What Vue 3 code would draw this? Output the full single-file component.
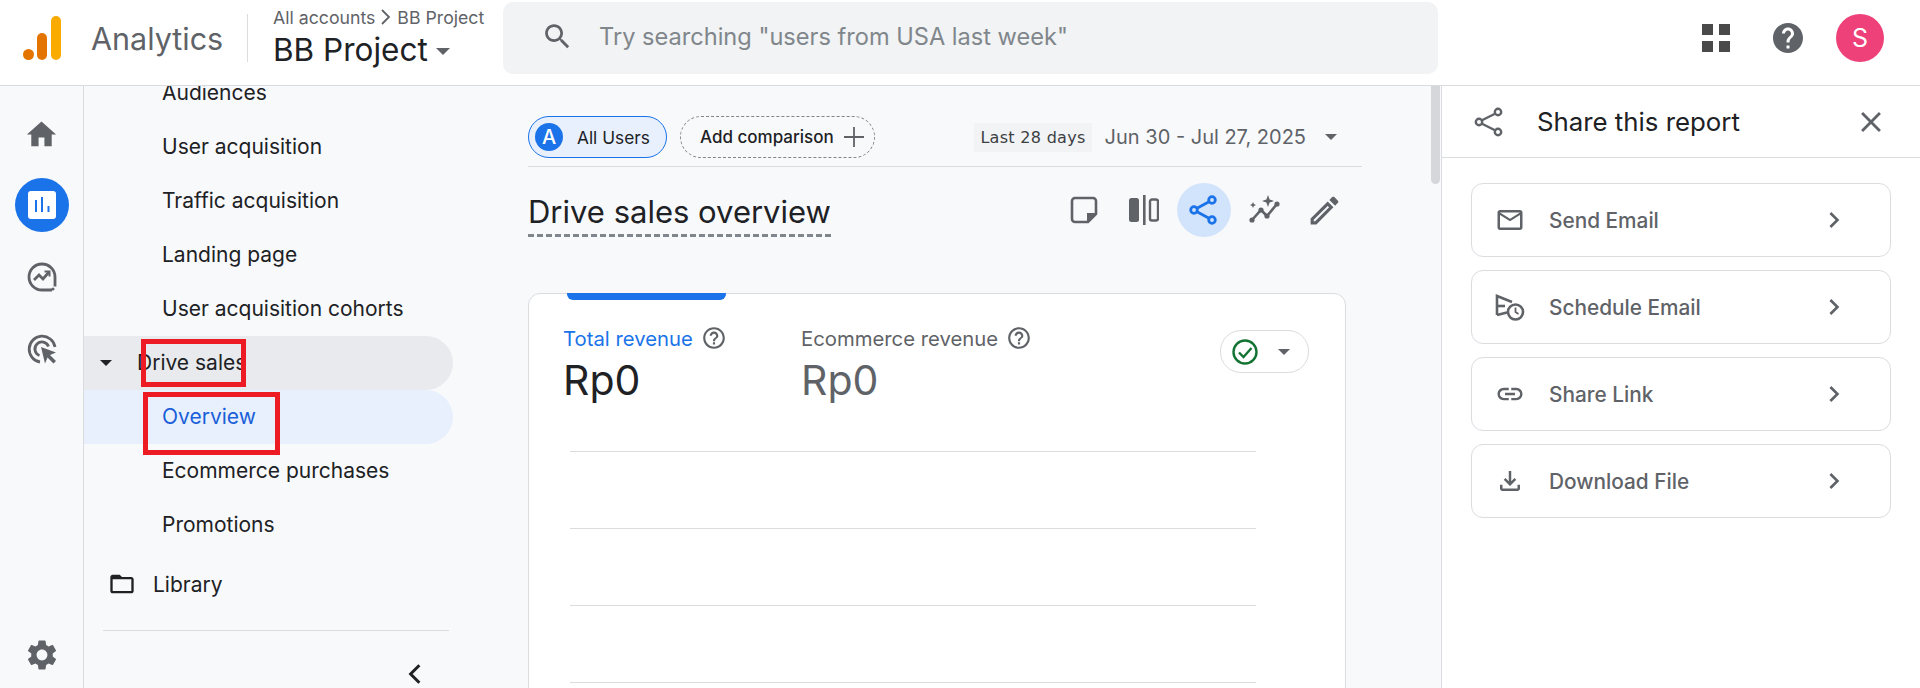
<script setup>
const P = {
  search: 'M15.5 14h-.79l-.28-.27C15.41 12.59 16 11.11 16 9.5 16 5.91 13.09 3 9.5 3S3 5.91 3 9.5 5.91 16 9.5 16c1.61 0 3.09-.59 4.23-1.57l.27.28v.79l5 4.99L20.49 19l-4.99-5zm-6 0C7.01 14 5 11.99 5 9.5S7.01 5 9.5 5 14 7.01 14 9.5 11.99 14 9.5 14z',
  help: 'M11 18h2v-2h-2v2zm1-16C6.48 2 2 6.48 2 12s4.48 10 10 10 10-4.48 10-10S17.52 2 12 2zm0 18c-4.41 0-8-3.59-8-8s3.59-8 8-8 8 3.59 8 8-3.59 8-8 8zm0-14c-2.21 0-4 1.79-4 4h2c0-1.1.9-2 2-2s2 .9 2 2c0 2-3 1.75-3 5h2c0-2.25 3-2.5 3-5 0-2.21-1.79-4-4-4z',
  helpFill: 'M12 2C6.48 2 2 6.48 2 12s4.48 10 10 10 10-4.48 10-10S17.52 2 12 2zm1 17h-2v-2h2v2zm2.07-7.75l-.9.92C13.45 12.9 13 13.5 13 15h-2v-.5c0-1.1.45-2.1 1.17-2.83l1.24-1.26c.37-.36.59-.86.59-1.41 0-1.1-.9-2-2-2s-2 .9-2 2H8c0-2.21 1.79-4 4-4s4 1.79 4 4c0 .88-.36 1.68-.93 2.25z',
  home: 'M10 20v-6h4v6h5v-8h3L12 3 2 12h3v8z',
  gear: 'M19.14 12.94c.04-.3.06-.61.06-.94 0-.32-.02-.64-.07-.94l2.03-1.58c.18-.14.23-.41.12-.61l-1.92-3.32c-.12-.22-.37-.29-.59-.22l-2.39.96c-.5-.38-1.03-.7-1.62-.94l-.36-2.54c-.04-.24-.24-.41-.48-.41h-3.84c-.24 0-.43.17-.47.41l-.36 2.54c-.59.24-1.13.57-1.62.94l-2.39-.96c-.22-.08-.47 0-.59.22L2.74 8.87c-.12.21-.08.47.12.61l2.03 1.58c-.05.3-.09.63-.09.94s.02.64.07.94l-2.03 1.58c-.18.14-.23.41-.12.61l1.92 3.32c.12.22.37.29.59.22l2.39-.96c.5.38 1.03.7 1.62.94l.36 2.54c.05.24.24.41.48.41h3.84c.24 0 .44-.17.47-.41l.36-2.54c.59-.24 1.13-.56 1.62-.94l2.39.96c.22.08.47 0 .59-.22l1.92-3.32c.12-.22.07-.47-.12-.61l-2.01-1.58zM12 15.6c-1.98 0-3.6-1.62-3.6-3.6s1.62-3.6 3.6-3.6 3.6 1.62 3.6 3.6-1.62 3.6-3.6 3.6z',
  folder: 'M20 6h-8l-2-2H4c-1.1 0-1.99.9-1.99 2L2 18c0 1.1.9 2 2 2h16c1.1 0 2-.9 2-2V8c0-1.1-.9-2-2-2zm0 12H4V8h16v10z',
  pencil: 'M3 17.25V21h3.75L17.81 9.94l-3.75-3.75L3 17.25zM5.92 19H5v-.92l9.06-9.06.92.92L5.92 19zM20.71 7.04c.39-.39.39-1.02 0-1.41l-2.34-2.34c-.2-.2-.45-.29-.71-.29s-.51.09-.7.28l-1.83 1.83 3.75 3.75 1.83-1.82z',
  close: 'M19 6.41L17.59 5 12 10.59 6.41 5 5 6.41 10.59 12 5 17.59 6.41 19 12 13.41 17.59 19 19 17.59 13.41 12z',
  chevron: 'M10 6L8.59 7.41 13.17 12l-4.58 4.59L10 18l6-6z',
  mail: 'M20 4H4c-1.1 0-2 .9-2 2v12c0 1.1.9 2 2 2h16c1.1 0 2-.9 2-2V6c0-1.1-.9-2-2-2zm0 14H4V8l8 5 8-5v10zm-8-7L4 6h16l-8 5z',
  link: 'M3.9 12c0-1.71 1.39-3.1 3.1-3.1h4V7H7c-2.76 0-5 2.24-5 5s2.24 5 5 5h4v-1.9H7c-1.71 0-3.1-1.39-3.1-3.1zM8 13h8v-2H8v2zm9-6h-4v1.9h4c1.71 0 3.1 1.39 3.1 3.1s-1.39 3.1-3.1 3.1h-4V17h4c2.76 0 5-2.24 5-5s-2.24-5-5-5z',
  download: 'M18 15v3H6v-3H4v3c0 1.1.9 2 2 2h12c1.1 0 2-.9 2-2v-3h-2zm-1-4l-1.41-1.41L13 12.17V4h-2v8.17L8.41 9.59 7 11l5 5 5-5z'
}
const topItems = ['Audiences', 'User acquisition', 'Traffic acquisition', 'Landing page', 'User acquisition cohorts']
const shareRows = [
  { label: 'Send Email', icon: 'mail' },
  { label: 'Schedule Email', icon: 'schedule' },
  { label: 'Share Link', icon: 'link' },
  { label: 'Download File', icon: 'download' }
]
</script>

<template>
  <div class="page">
    <header class="top">
      <svg class="logo" width="38" height="44" viewBox="0 0 38 44">
        <rect x="28" y="0" width="10" height="44" rx="5" fill="#f9ab00" />
        <rect x="14" y="17" width="10" height="27" rx="5" fill="#e37400" />
        <circle cx="5.5" cy="38.5" r="5.5" fill="#e37400" />
      </svg>
      <span class="brand">Analytics</span>
      <span class="vline"></span>
      <div class="crumbs">
        <div class="crumb-line">All accounts
          <svg width="14" height="20" viewBox="0 0 14 20"><path d="M3 3l7 7-7 7" fill="none" stroke="#5f6368" stroke-width="1.8" /></svg>
          BB Project</div>
        <div class="prop">BB Project <span class="caret-big"></span></div>
      </div>
      <div class="search">
        <svg width="33" height="33" viewBox="0 0 24 24"><path :d="P.search" fill="#5f6368" /></svg>
        <span>Try searching "users from USA last week"</span>
      </div>
      <div class="top-right">
        <div class="apps"><i></i><i></i><i></i><i></i></div>
        <svg width="36" height="36" viewBox="0 0 24 24"><path :d="P.helpFill" fill="#5f6368" /></svg>
        <div class="avatar">S</div>
      </div>
    </header>

    <div class="body">
      <aside class="rail">
        <svg class="ri" width="35" height="35" viewBox="0 0 24 24"><path :d="P.home" fill="#5f6368" /></svg>
        <div class="rail-active">
          <svg width="28" height="28" viewBox="0 0 28 28">
            <rect width="28" height="28" rx="3" fill="#fff" />
            <path d="M8 9v12M14 6v15M20.500 15v6" stroke="#1a73e8" stroke-width="2" />
          </svg>
        </div>
        <svg class="ri" width="32" height="32" viewBox="0 0 32 32" fill="none" stroke="#5f6368" stroke-width="2.800">
          <path d="M29 25.500V16A13 13 0 1 0 16 29h10" />
          <path d="M8 19l5-5 4 4 6-7" />
          <path d="M18.500 10.500h5v5" stroke-width="2" />
          <circle cx="27" cy="28" r="1.500" fill="#5f6368" stroke="none" />
        </svg>
        <svg class="ri" width="32" height="32" viewBox="0 0 32 32" fill="none" stroke="#5f6368" stroke-width="2.800">
          <path d="M14 29A13 13 0 1 1 29 14" />
          <path d="M13.500 22.500A7 7 0 1 1 22.500 13.500" />
          <path d="M15 14l15 5.500-6 2.500 6 6-2.500 2.500-6-6-2.500 6z" fill="#5f6368" stroke="none" />
        </svg>
        <svg class="gear" width="36" height="36" viewBox="0 0 24 24"><path :d="P.gear" fill="#5f6368" /></svg>
      </aside>

      <nav class="nav">
        <div class="nav-list">
          <div v-for="item in topItems" :key="item" class="nav-item">{{ item }}</div>
          <div class="nav-item group">
            <span class="caret-small"></span>
            <span class="group-label">Drive sales</span>
            <span class="mark mark-a"></span>
          </div>
          <div class="nav-item active">Overview<span class="mark mark-b"></span></div>
          <div class="nav-item">Ecommerce purchases</div>
          <div class="nav-item">Promotions</div>
          <div class="library">
            <svg width="28" height="28" viewBox="0 0 24 24"><path :d="P.folder" fill="#202124" /></svg>
            <span>Library</span>
          </div>
          <div class="nav-rule"></div>
          <svg class="collapse" width="30" height="30" viewBox="0 0 24 24"><path d="M15.500 5l-7 7 7 7" fill="none" stroke="#202124" stroke-width="2.400" /></svg>
        </div>
      </nav>

      <main class="main">
        <div class="chips">
          <div class="chip-users"><span class="badge">A</span>All Users</div>
          <div class="chip-add">Add comparison
            <svg width="24" height="24" viewBox="0 0 24 24"><path d="M12 2v20M2 12h20" stroke="#5f6368" stroke-width="1.800" /></svg>
          </div>
          <div class="dates">
            <span class="range-tag">Last 28 days</span>
            <span class="range">Jun 30 - Jul 27, 2025</span>
            <span class="caret-small grey"></span>
          </div>
        </div>
        <div class="title-row">
          <h1>Drive sales overview</h1>
          <div class="tools">
            <span class="tool">
              <svg width="30" height="30" viewBox="0 0 30 30" fill="none" stroke="#5f6368" stroke-width="2.600"><path d="M19 27H6a3 3 0 0 1-3-3V6a3 3 0 0 1 3-3h18a3 3 0 0 1 3 3v13z" /><path d="M27 18h-9v9z" fill="#5f6368" stroke="none" /></svg>
            </span>
            <span class="tool">
              <svg width="30" height="30" viewBox="0 0 30 30"><rect x="0" y="3" width="10" height="24" rx="2.500" fill="#5f6368" /><rect x="14" y="0" width="2.600" height="30" fill="#5f6368" /><rect x="21" y="4.500" width="8" height="21" rx="2" fill="none" stroke="#5f6368" stroke-width="2.400" /></svg>
            </span>
            <span class="tool on">
              <svg width="30" height="30" viewBox="0 0 30 30" fill="none" stroke="#1a73e8" stroke-width="2.800"><circle cx="23" cy="5" r="3.300" /><circle cx="5" cy="15" r="3.300" /><circle cx="23" cy="25" r="3.300" /><path d="M8 13.300L20 6.700M8 16.700l12 6.600" /></svg>
            </span>
            <span class="tool">
              <svg width="32" height="32" viewBox="0 0 32 32" fill="none" stroke="#5f6368" stroke-width="2.600"><path d="M4 26l9-10 6 6 10-12" /><circle cx="4" cy="26" r="2.600" fill="#5f6368" stroke="none" /><circle cx="13" cy="16" r="2.600" fill="#5f6368" stroke="none" /><circle cx="19" cy="22" r="2.600" fill="#5f6368" stroke="none" /><circle cx="29" cy="10" r="2.600" fill="#5f6368" stroke="none" /><path d="M20 1l1.600 4.400L26 7l-4.400 1.600L20 13l-1.600-4.400L14 7l4.400-1.600zM5 8l.9 2.100L8 11l-2.100.9L5 14l-.9-2.100L2 11l2.100-.9z" fill="#5f6368" stroke="none" /></svg>
            </span>
            <span class="tool">
              <svg width="37" height="37" viewBox="0 0 24 24"><path :d="P.pencil" fill="#5f6368" /></svg>
            </span>
          </div>
        </div>
        <section class="card">
          <span class="tab"></span>
          <div class="metrics">
            <div class="metric m1">
              <div class="m-label blue">Total revenue
                <svg width="26" height="26" viewBox="0 0 24 24"><path :d="P.help" fill="#5f6368" /></svg></div>
              <div class="m-value">Rp0</div>
            </div>
            <div class="metric">
              <div class="m-label">Ecommerce revenue
                <svg width="26" height="26" viewBox="0 0 24 24"><path :d="P.help" fill="#5f6368" /></svg></div>
              <div class="m-value grey">Rp0</div>
            </div>
            <div class="check-chip">
              <svg width="28" height="28" viewBox="0 0 28 28" fill="none" stroke="#137333" stroke-width="2.400"><circle cx="14" cy="14" r="11.500" /><path d="M8 14.500l4.500 4.500 8-9" /></svg>
              <span class="caret-small grey"></span>
            </div>
          </div>
          <div class="grid-lines"><i></i><i></i><i></i><i></i></div>
        </section>
        <span class="scroll"></span>
      </main>

      <aside class="panel">
        <div class="panel-head">
          <svg width="30" height="30" viewBox="0 0 30 30" fill="none" stroke="#5f6368" stroke-width="2.400"><circle cx="24" cy="5" r="3.200" /><circle cx="5" cy="15" r="3.200" /><circle cx="24" cy="25" r="3.200" /><path d="M8 13.300L21 6.700M8 16.700l13 6.600" /></svg>
          <span class="panel-title">Share this report</span>
          <svg width="34" height="34" viewBox="0 0 24 24"><path :d="P.close" fill="#5f6368" /></svg>
        </div>
        <div class="rows">
          <div v-for="row in shareRows" :key="row.label" class="row">
            <span class="row-icon">
              <svg v-if="row.icon === 'schedule'" width="30" height="30" viewBox="0 0 30 30" fill="none" stroke="#5f6368" stroke-width="2.600">
                <path d="M2 23V4l15 6" /><path d="M2 23l10-2.500" /><path d="M2 14h8" />
                <circle cx="20.500" cy="20" r="7.500" /><path d="M20.500 15.500V20l3 2" stroke-width="1.800" />
              </svg>
              <svg v-else width="30" height="30" viewBox="0 0 24 24"><path :d="P[row.icon]" fill="#5f6368" /></svg>
            </span>
            <span class="row-label">{{ row.label }}</span>
            <svg width="32" height="32" viewBox="0 0 24 24"><path :d="P.chevron" fill="#5f6368" /></svg>
          </div>
        </div>
      </aside>
    </div>
  </div>
</template>

<style>
html, body { margin: 0; background: #fff; }
</style>

<style scoped>
.page { width: 1920px; height: 688px; overflow: hidden; display: flex; flex-direction: column; font-family: "Inter", "Liberation Sans", sans-serif; color: #202124; }
.top { height: 85px; flex: none; display: flex; align-items: center; border-bottom: 1px solid #dadce0; box-sizing: content-box; background: #fff; }
.logo { margin-left: 23px; margin-top: -10px; flex: none; }
.brand { margin-left: 30px; font-size: 30.5px; color: #5f6368; margin-top: -8px; width: 132px; }
.vline { width: 1px; height: 48px; background: #dadce0; margin-left: 24px; margin-top: -10px; }
.crumbs { margin-left: 25px; width: 230px; margin-top: -8px; }
.crumb-line { font-size: 17.7px; color: #5f6368; display: flex; align-items: center; gap: 4px; height: 20px; white-space: nowrap; }
.prop { font-size: 31.5px; line-height: 40px; margin-top: 3px; display: flex; align-items: center; gap: 8px; white-space: nowrap; }
.caret-big { width: 0; height: 0; border: 7px solid transparent; border-top: 7px solid #5f6368; border-bottom: 0; margin-top: 2px; }
.search { width: 935px; height: 72px; background: #f1f3f4; border-radius: 10px; margin-top: -10px; display: flex; align-items: center; box-sizing: border-box; padding-left: 38px; padding-bottom: 2px; gap: 25px; font-size: 23.6px; color: #80868b; flex: none; }
.top-right { margin-left: auto; display: flex; align-items: center; margin-top: -9px; }
.apps { display: grid; grid-template-columns: 11px 11px; gap: 6px; margin-right: 40px; }
.apps i { width: 11px; height: 11px; background: #4a4a4a; display: block; }
.avatar { width: 48px; height: 48px; border-radius: 50%; background: #ee4079; color: #fff; font-size: 25px; display: flex; align-items: center; justify-content: center; margin-left: 30px; margin-right: 36px; }
.body { flex: 1; display: flex; min-height: 0; background: #f8f9fb; }
.rail { width: 83px; flex: none; border-right: 1px solid #dadce0; display: flex; flex-direction: column; align-items: center; padding-top: 31px; box-sizing: content-box; }
.rail-active { width: 54px; height: 54px; border-radius: 50%; background: #1a73e8; display: flex; align-items: center; justify-content: center; margin-top: 26px; }
.ri { margin-top: 0; flex: none; }
.rail-active + .ri { margin-top: 29px; }
.ri + .ri { margin-top: 40px; }
.gear { margin-top: auto; margin-bottom: 15px; }
.nav { width: 369px; flex: none; overflow: hidden; font-size: 21px; position: relative; }
.nav-list { margin-top: -20px; position: relative; }
.nav-item { height: 54px; box-sizing: border-box; padding-bottom: 1px; display: flex; align-items: center; padding-left: 78px; border-radius: 0 27px 27px 0; position: relative; white-space: nowrap; }
.group { background: #e8eaed; padding-left: 0; }
.group-label { margin-left: 25px; }
.caret-small { width: 0; height: 0; border: 6px solid transparent; border-top: 6px solid #202124; border-bottom: 0; flex: none; }
.group .caret-small { margin-left: 16px; }
.caret-small.grey { border-top-color: #5f6368; }
.active { background: #e8f0fe; color: #1a5fd8; }
.mark { position: absolute; border: 5px solid #ed1c24; box-sizing: border-box; }
.mark-a { left: 57px; top: 3px; width: 105px; height: 48px; }
.mark-b { left: 59px; top: 2px; width: 137px; height: 63px; }
.library { height: 60px; display: flex; align-items: center; padding-left: 24px; gap: 17px; margin-top: 2px; }
.nav-rule { height: 1px; background: #dadce0; margin: 16px 3px 0 19px; width: 346px; }
.collapse { display: block; margin: 28px 0 0 316px; }
.main { width: 988px; flex: none; position: relative; overflow: hidden; box-sizing: border-box; }
.chips { margin-left: 75px; width: 834px; height: 81px; box-sizing: border-box; padding-top: 30px; border-bottom: 1px solid #dadce0; display: flex; align-items: flex-start; }
.chip-users { width: 139px; height: 42px; box-sizing: border-box; background: #e8f0fe; border: 1px solid #1a73e8; border-radius: 21px; display: flex; align-items: center; font-size: 17.3px; padding-left: 6px; gap: 14px; white-space: nowrap; }
.badge { width: 28px; height: 28px; border-radius: 50%; background: #1a73e8; color: #fff; font-size: 20px; font-weight: 500; display: flex; align-items: center; justify-content: center; }
.chip-add { width: 195px; height: 42px; box-sizing: border-box; margin-left: 13px; border: 1px dashed #80868b; border-radius: 21px; display: flex; align-items: center; font-size: 17px; font-weight: 500; padding-left: 19px; gap: 8px; white-space: nowrap; }
.dates { margin-left: auto; display: flex; align-items: center; height: 42px; margin-right: 25px; }
.range-tag { background: #f1f3f4; font-size: 16px; font-family: "DejaVu Sans", sans-serif; letter-spacing: .3px; padding: 5px 6px; color: #3c4043; white-space: nowrap; }
.range { font-size: 20px; color: #5f6368; margin-left: 13px; white-space: nowrap; }
.dates .caret-small { margin-left: 19px; }
.title-row { margin-left: 75px; width: 834px; height: 126px; display: flex; align-items: flex-start; position: relative; }
h1 { margin: 24px 0 0; font-weight: 400; font-size: 31px; line-height: 42px; height: 43px; border-bottom: 3px dashed #80868b; white-space: nowrap; }
.tools { position: absolute; left: 529px; top: 16px; display: flex; gap: 6px; }
.tool { width: 54px; height: 54px; display: flex; align-items: center; justify-content: center; border-radius: 50%; }
.tool.on { background: #d2e3fc; }
.card { margin-left: 75px; width: 818px; height: 500px; box-sizing: border-box; background: #fff; border: 1px solid #dadce0; border-radius: 12px; position: relative; }
.tab { position: absolute; left: 38px; top: -1px; width: 159px; height: 7px; background: #1a73e8; border-radius: 0 0 6px 6px; }
.metrics { display: flex; padding: 29px 0 0 34px; height: 119px; box-sizing: border-box; }
.metric { width: 237px; }
.m1 { width: 238px; }
.metric + .metric { width: auto; }
.m-label { font-size: 20.3px; color: #5f6368; display: flex; align-items: center; gap: 8px; height: 30px; white-space: nowrap; }
.m-label.blue { color: #1a73e8; }
.m-value { font-size: 41px; line-height: 50px; margin-top: 2px; }
.m-value.grey { color: #5f6368; }
.check-chip { position: absolute; left: 691px; top: 36px; width: 89px; height: 43px; box-sizing: border-box; border: 1px solid #dadce0; border-radius: 21px; display: flex; align-items: center; padding-left: 10px; gap: 19px; }
.grid-lines { margin: 38px 0 0 41px; width: 686px; }
.grid-lines i { display: block; height: 1px; background: #dadce0; margin-bottom: 76px; }
.scroll { position: absolute; right: 1px; top: 0; width: 9px; height: 98px; background: #d5d7db; border-radius: 0 0 5px 5px; }
.panel { flex: 1; background: #fff; border-left: 1px solid #dadce0; }
.panel-head { height: 72px; border-bottom: 1px solid #dadce0; display: flex; align-items: center; box-sizing: border-box; padding: 0 32px 0 32px; }
.panel-title { font-size: 25.8px; margin-left: 33px; flex: 1; white-space: nowrap; }
.rows { padding: 25px 29px 0 29px; display: flex; flex-direction: column; gap: 13px; }
.row { height: 74px; box-sizing: border-box; border: 1px solid #dadce0; border-radius: 12px; display: flex; align-items: center; padding: 0 40px 0 22px; color: #5f6368; font-size: 20.8px; font-weight: 500; }
.row-icon { width: 32px; height: 32px; display: flex; align-items: center; justify-content: center; }
.row-label { margin-left: 23px; flex: 1; white-space: nowrap; }
</style>
